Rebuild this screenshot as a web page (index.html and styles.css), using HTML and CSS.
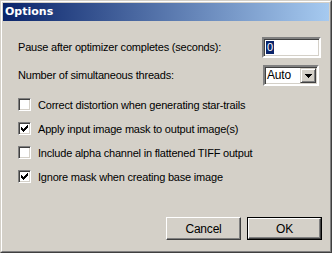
FILE: index.html
```html
<!DOCTYPE html>
<html>
<head>
<meta charset="utf-8">
<link rel="stylesheet" href="styles.css">
</head>
<body>
<div class="window">
  <div class="frame">
    <div class="titlebar">Options</div>
    <div class="content">
      <div class="field-row first">
        <span class="label">Pause after optimizer completes (seconds):</span>
        <div class="edit"><span class="sel">0</span></div>
      </div>
      <div class="field-row">
        <span class="label">Number of simultaneous threads:</span>
        <div class="combo">
          <span class="combo-text">Auto</span>
          <span class="combo-btn"><svg width="7" height="4" viewBox="0 0 7 4" shape-rendering="crispEdges"><path d="M0 0H7V1H6V2H5V3H4V4H3V3H2V2H1V1H0Z" fill="#000"/></svg></span>
        </div>
      </div>
      <div class="checks">
        <label class="check"><span class="box"></span><span>Correct distortion when generating star-trails</span></label>
        <label class="check"><span class="box"><svg class="mark" width="7" height="7" viewBox="0 0 7 7" shape-rendering="crispEdges"><path d="M6 0h1v3h-1v1h-1v1h-1v1h-1v1h-1v-1h-1v-1h-1v-3h1v1h1v1h1v-1h1v-1h1v-1h1z" fill="#000"/></svg></span><span>Apply input image mask to output image(s)</span></label>
        <label class="check"><span class="box"></span><span>Include alpha channel in flattened TIFF output</span></label>
        <label class="check"><span class="box"><svg class="mark" width="7" height="7" viewBox="0 0 7 7" shape-rendering="crispEdges"><path d="M6 0h1v3h-1v1h-1v1h-1v1h-1v1h-1v-1h-1v-1h-1v-3h1v1h1v1h1v-1h1v-1h1v-1h1z" fill="#000"/></svg></span><span>Ignore mask when creating base image</span></label>
      </div>
      <div class="buttons">
        <div class="btn">Cancel</div>
        <div class="btn default"><div class="btn-inner">OK</div></div>
      </div>
    </div>
  </div>
</div>
</body>
</html>
```

FILE: styles.css
```css
html, body {
  margin: 0;
  padding: 0;
  background: #d4d0c8;
}
.window {
  width: 332px;
  height: 253px;
  box-sizing: border-box;
  background: #d4d0c8;
  border: 1px solid;
  border-color: #d4d0c8 #404040 #404040 #d4d0c8;
  font-family: "Liberation Sans", Arial, sans-serif;
  font-size: 11px;
  letter-spacing: -0.2px;
  color: #000;
}
.frame {
  height: 100%;
  box-sizing: border-box;
  border: 1px solid;
  border-color: #ffffff #808080 #808080 #ffffff;
  padding: 1px;
  display: flex;
  flex-direction: column;
}
.titlebar {
  height: 18px;
  background: linear-gradient(to right, #0a246a, #a6caf0);
  color: #fff;
  font-weight: bold;
  font-family: "DejaVu Sans", sans-serif;
  font-size: 11px;
  letter-spacing: 0;
  line-height: 18px;
  padding-left: 2px;
}
.content {
  flex: 1;
  display: flex;
  flex-direction: column;
  padding: 0 7px 0 15px;
}
.field-row {
  display: flex;
  align-items: center;
  justify-content: space-between;
  height: 21px;
  margin-top: 7px;
}
.field-row.first {
  margin-top: 16px;
}
.label {
  line-height: 13px;
}
.edit {
  width: 59px;
  height: 21px;
  box-sizing: border-box;
  background: #fff;
  border: 2px solid;
  border-color: #808080 #ffffff #ffffff #808080;
  box-shadow: inset 1px 1px 0 #404040, inset -1px -1px 0 #d4d0c8;
  padding: 2px 0 0 2px;
  margin-right: 1px;
}
.sel {
  display: inline-block;
  background: #0a246a;
  color: #fff;
  line-height: 13px;
  padding: 0 1px;
}
.combo {
  width: 56px;
  height: 21px;
  box-sizing: border-box;
  background: #fff;
  border: 2px solid;
  border-color: #808080 #ffffff #ffffff #808080;
  box-shadow: inset 1px 1px 0 #404040, inset -1px -1px 0 #d4d0c8;
  display: flex;
  align-items: stretch;
  padding: 1px;
  margin-right: 3px;
}
.combo-text {
  flex: 1;
  padding-left: 1px;
  line-height: 15px;
  font-size: 12px;
}
.combo-btn {
  width: 16px;
  box-sizing: border-box;
  background: #d4d0c8;
  border: 1px solid;
  border-color: #d4d0c8 #404040 #404040 #d4d0c8;
  box-shadow: inset 1px 1px 0 #fff, inset -1px -1px 0 #808080;
  display: flex;
  align-items: center;
  justify-content: center;
}
.checks {
  display: flex;
  flex-direction: column;
  gap: 11px;
  margin-top: 12px;
}
.check {
  display: flex;
  align-items: center;
  height: 13px;
  gap: 7px;
}
.box {
  position: relative;
  width: 13px;
  height: 13px;
  box-sizing: border-box;
  background: #fff;
  border: 1px solid;
  border-color: #808080 #ffffff #ffffff #808080;
  box-shadow: inset 1px 1px 0 #404040, inset -1px -1px 0 #d4d0c8;
  flex: none;
}
.mark {
  position: absolute;
  left: 2px;
  top: 2px;
}
.buttons {
  margin-top: auto;
  margin-bottom: 10px;
  display: flex;
  justify-content: flex-end;
  gap: 6px;
}
.btn {
  width: 75px;
  height: 23px;
  box-sizing: border-box;
  background: #d4d0c8;
  border: 1px solid;
  border-color: #ffffff #404040 #404040 #ffffff;
  box-shadow: inset -1px -1px 0 #808080;
  display: flex;
  align-items: center;
  justify-content: center;
  font-size: 12px;
}
.btn.default {
  border: 1px solid #000;
  box-shadow: none;
  align-items: stretch;
  justify-content: stretch;
}
.btn-inner {
  flex: 1;
  border: 1px solid;
  border-color: #ffffff #404040 #404040 #ffffff;
  box-shadow: inset -1px -1px 0 #808080;
  display: flex;
  align-items: center;
  justify-content: center;
}
```
